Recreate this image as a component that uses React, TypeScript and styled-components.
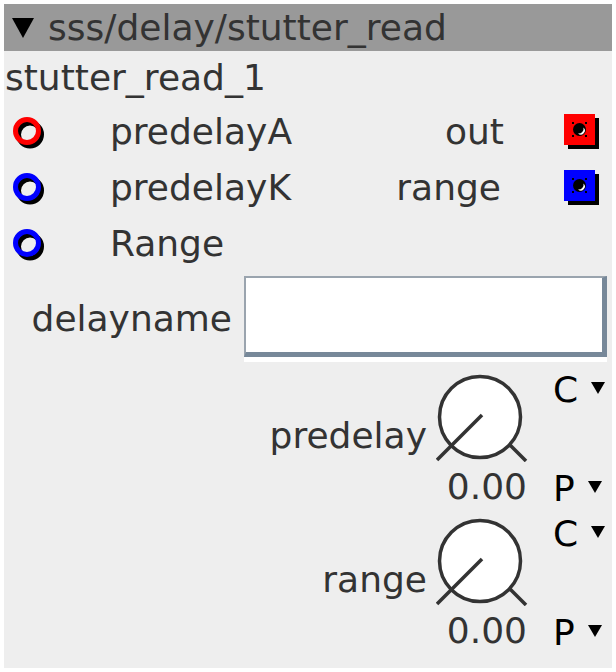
import styled, { createGlobalStyle } from 'styled-components';

const GlobalStyle = createGlobalStyle`
  body {
    margin: 0;
    background: #fff;
  }
`;

const Panel = styled.div`
  margin: 4px;
  width: 608px;
  padding-bottom: 15px;
  background: #eee;
  color: #333;
  font-family: 'DejaVu Sans', sans-serif;
  font-size: 36px;
`;

const Header = styled.div`
  display: flex;
  align-items: center;
  height: 47px;
  line-height: 47px;
  padding-left: 4px;
  background: #999;
  white-space: nowrap;
`;

const CaretSvg = styled.svg`
  flex-shrink: 0;
  display: block;
`;

const HeaderCaretBox = styled.span`
  display: flex;
  margin: 1px 14px 0 4px;
`;

const Title = styled.div`
  height: 53px;
  line-height: 53px;
  padding-left: 1px;
`;

const PortRow = styled.div`
  display: flex;
  align-items: center;
  height: 56px;
  line-height: 56px;
`;

const InletCell = styled.div`
  display: flex;
  align-items: center;
  width: 106px;
  padding-left: 6px;
  box-sizing: border-box;
`;

const InLabel = styled.div`
  flex: 1;
`;

const OutLabel = styled.div<{ $nudge?: number }>`
  text-align: right;
  margin-right: ${p => p.$nudge ?? 0}px;
`;

const OutletCell = styled.div`
  display: flex;
  align-items: center;
  width: 108px;
  padding-left: 60px;
  box-sizing: border-box;
`;

const FieldRow = styled.div`
  display: flex;
  align-items: center;
  margin: 4px 0 3px;
`;

const FieldLabel = styled.div`
  width: 240px;
  padding-right: 12px;
  box-sizing: border-box;
  text-align: right;
  line-height: 36px;
`;

const InputFrame = styled.div`
  border-bottom: 5px solid #fff;
`;

const TextBox = styled.div`
  width: 363px;
  height: 81px;
  box-sizing: border-box;
  background: #fff;
  border-style: solid;
  border-width: 2px 5px 5px 2px;
  border-color: #9aa4ae #778899 #778899 #9aa4ae;
`;

const KnobBlock = styled.div`
  display: flex;
  height: 144px;
`;

const KnobLabel = styled.div`
  width: 432px;
  padding: 53px 9px 0 0;
  box-sizing: border-box;
  text-align: right;
  line-height: 36px;
`;

const KnobCol = styled.div`
  display: flex;
  flex-direction: column;
  width: 92px;
  padding-top: 7px;
`;

const KnobValue = styled.div`
  margin-top: 7px;
  padding-right: 1px;
  text-align: right;
  line-height: 36px;
`;

const SideCol = styled.div`
  display: flex;
  flex-direction: column;
  justify-content: space-between;
  padding: 7px 0 2px 25px;
`;

const ModeSelect = styled.div`
  display: flex;
  align-items: flex-start;
  line-height: 36px;
  color: #000;
`;

const SelectCaretBox = styled.span`
  display: flex;
  margin: 10px 0 0 13px;
`;

function Caret({ w, h }: { w: number; h: number }) {
  return (
    <CaretSvg width={w} height={h} viewBox={`0 0 ${w} ${h}`}>
      <polygon points={`0,0 ${w},0 ${w / 2},${h}`} fill="#000" />
    </CaretSvg>
  );
}

function Inlet({ color }: { color: string }) {
  return (
    <svg width="36" height="36" viewBox="0 0 36 36">
      <circle cx="20" cy="20.5" r="11.5" fill="none" stroke="#000" strokeWidth="5" />
      <circle cx="17" cy="17" r="11.5" fill="none" stroke={color} strokeWidth="5" />
    </svg>
  );
}

function Outlet({ color }: { color: string }) {
  return (
    <svg width="36" height="36" viewBox="0 0 36 36">
      <rect x="4" y="4" width="31" height="31" fill="#000" />
      <rect x="0" y="0" width="31" height="31" fill={color} />
      {[
        [8, 8],
        [21, 8],
        [8, 21],
        [21, 21],
      ].map(([x, y]) => (
        <rect key={`${x}-${y}`} x={x} y={y} width="2" height="2" fill="#000" />
      ))}
      <circle cx="15.5" cy="15.5" r="6.5" fill="#000" />
      <path d="M19.5 13.5 A4 4 0 0 1 14 19.5 A5 5 0 0 0 19.5 13.5 Z" fill="#fff" />
    </svg>
  );
}

function Knob() {
  return (
    <svg width="92" height="90" viewBox="0 0 92 90">
      <circle cx="44" cy="45" r="40.5" fill="#fff" stroke="#333" strokeWidth="3.5" />
      <line x1="1" y1="88" x2="46" y2="43" stroke="#333" strokeWidth="3.5" />
      <line x1="73" y1="72" x2="90" y2="89" stroke="#333" strokeWidth="3.5" />
    </svg>
  );
}

const ports = [
  { inName: 'predelayA', inColor: '#f00', outName: 'out', outColor: '#f00', nudge: 0 },
  { inName: 'predelayK', inColor: '#00f', outName: 'range', outColor: '#00f', nudge: 3 },
  { inName: 'Range', inColor: '#00f' },
];

const knobs = ['predelay', 'range'];

export default function App() {
  return (
    <>
      <GlobalStyle />
      <Panel>
        <Header>
          <HeaderCaretBox>
            <Caret w={22} h={20} />
          </HeaderCaretBox>
          sss/delay/stutter_read
        </Header>
        <Title>stutter_read_1</Title>

        {ports.map(p => (
          <PortRow key={p.inName}>
            <InletCell>
              <Inlet color={p.inColor} />
            </InletCell>
            <InLabel>{p.inName}</InLabel>
            {p.outName && <OutLabel $nudge={p.nudge}>{p.outName}</OutLabel>}
            <OutletCell>{p.outColor && <Outlet color={p.outColor} />}</OutletCell>
          </PortRow>
        ))}

        <FieldRow>
          <FieldLabel>delayname</FieldLabel>
          <InputFrame>
            <TextBox />
          </InputFrame>
        </FieldRow>

        {knobs.map(name => (
          <KnobBlock key={name}>
            <KnobLabel>{name}</KnobLabel>
            <KnobCol>
              <Knob />
              <KnobValue>0.00</KnobValue>
            </KnobCol>
            <SideCol>
              {['C', 'P'].map(mode => (
                <ModeSelect key={mode}>
                  {mode}
                  <SelectCaretBox>
                    <Caret w={14} h={12} />
                  </SelectCaretBox>
                </ModeSelect>
              ))}
            </SideCol>
          </KnobBlock>
        ))}
      </Panel>
    </>
  );
}
